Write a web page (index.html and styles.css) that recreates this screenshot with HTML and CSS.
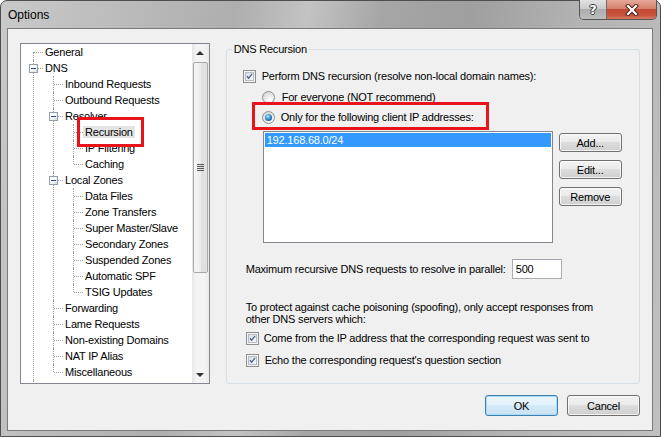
FILE: index.html
```html
<!DOCTYPE html>
<html>
<head>
<meta charset="utf-8">
<link rel="stylesheet" href="styles.css">
</head>
<body>
<div class="window">
  <div class="titlebar">
    <span class="title">Options</span>
    <div class="caps">
      <div class="cap help">?</div>
      <div class="cap close">
        <svg width="16" height="12" viewBox="0 0 16 12"><path d="M4 2 L12 10 M12 2 L4 10" stroke="#4a2018" stroke-width="4.2" stroke-linecap="square" fill="none"/><path d="M4 2 L12 10 M12 2 L4 10" stroke="#ffffff" stroke-width="2.2" stroke-linecap="square" fill="none"/></svg>
      </div>
    </div>
  </div>
  <div class="client">
    <div class="main">
      <div class="tree">
        <ul class="tree-root">
          <li class="first"><div class="row"><span class="lbl">General</span></div></li>
          <li><div class="row"><span class="exp"></span><span class="lbl">DNS</span></div>
            <ul>
              <li><div class="row"><span class="lbl">Inbound Requests</span></div></li>
              <li><div class="row"><span class="lbl">Outbound Requests</span></div></li>
              <li><div class="row"><span class="exp"></span><span class="lbl">Resolver</span></div>
                <ul>
                  <li><div class="row"><span class="lbl sel">Recursion</span><span class="annot annot-tree"></span></div></li>
                  <li><div class="row"><span class="lbl">IP Filtering</span></div></li>
                  <li class="last"><div class="row"><span class="lbl">Caching</span></div></li>
                </ul>
              </li>
              <li><div class="row"><span class="exp"></span><span class="lbl">Local Zones</span></div>
                <ul>
                  <li><div class="row"><span class="lbl">Data Files</span></div></li>
                  <li><div class="row"><span class="lbl">Zone Transfers</span></div></li>
                  <li><div class="row"><span class="lbl">Super Master/Slave</span></div></li>
                  <li><div class="row"><span class="lbl">Secondary Zones</span></div></li>
                  <li><div class="row"><span class="lbl">Suspended Zones</span></div></li>
                  <li><div class="row"><span class="lbl">Automatic SPF</span></div></li>
                  <li class="last"><div class="row"><span class="lbl">TSIG Updates</span></div></li>
                </ul>
              </li>
              <li><div class="row"><span class="lbl">Forwarding</span></div></li>
              <li><div class="row"><span class="lbl">Lame Requests</span></div></li>
              <li><div class="row"><span class="lbl">Non-existing Domains</span></div></li>
              <li><div class="row"><span class="lbl">NAT IP Alias</span></div></li>
              <li class="last"><div class="row"><span class="lbl">Miscellaneous</span></div></li>
            </ul>
          </li>
          <li><div class="row"></div></li>
        </ul>
        <div class="vscroll">
          <div class="sb-arrow"><span class="tri up"></span></div>
          <div class="sb-thumb"><span class="grip"></span></div>
          <div class="sb-space"></div>
          <div class="sb-arrow"><span class="tri down"></span></div>
        </div>
      </div>
      <fieldset class="group">
        <legend>DNS Recursion</legend>
        <div class="opt r1">
          <span class="cb"><svg width="9" height="9" viewBox="0 0 9 9"><path d="M1.3 4.2 L3.4 6.8 L7.8 1.2" fill="none" stroke="#4b5f8e" stroke-width="1.7"/></svg></span>
          <span>Perform DNS recursion (resolve non-local domain names):</span>
        </div>
        <div class="opt rad1">
          <span class="rb"></span>
          <span>For everyone (NOT recommend)</span>
        </div>
        <div class="opt rad2">
          <span class="rb on"><i></i></span>
          <span>Only for the following client IP addresses:</span>
          <span class="annot annot-radio"></span>
        </div>
        <div class="listarea">
          <div class="listbox">
            <div class="list-item sel">192.168.68.0/24</div>
          </div>
          <div class="side-btns">
            <div class="btn">Add...</div>
            <div class="btn">Edit...</div>
            <div class="btn">Remove</div>
          </div>
        </div>
        <div class="maxrow">
          <span>Maximum recursive DNS requests to resolve in parallel:</span>
          <div class="textbox">500</div>
        </div>
        <div class="note">To protect against cache poisoning (spoofing), only accept responses from<br>other DNS servers which:</div>
        <div class="opt c2">
          <span class="cb"><svg width="9" height="9" viewBox="0 0 9 9"><path d="M1.3 4.2 L3.4 6.8 L7.8 1.2" fill="none" stroke="#4b5f8e" stroke-width="1.7"/></svg></span>
          <span>Come from the IP address that the corresponding request was sent to</span>
        </div>
        <div class="opt c3">
          <span class="cb"><svg width="9" height="9" viewBox="0 0 9 9"><path d="M1.3 4.2 L3.4 6.8 L7.8 1.2" fill="none" stroke="#4b5f8e" stroke-width="1.7"/></svg></span>
          <span>Echo the corresponding request's question section</span>
        </div>
      </fieldset>
    </div>
    <div class="footer">
      <div class="btn big default">OK</div>
      <div class="btn big">Cancel</div>
    </div>
  </div>
</div>
</body>
</html>
```
FILE: styles.css
```css
html, body {
  margin: 0;
  padding: 0;
}
body {
  width: 661px;
  height: 437px;
  overflow: hidden;
  background: #ffffff;
  font-family: "Liberation Sans", Arial, sans-serif;
  font-size: 11px;
  letter-spacing: -0.2px;
  color: #000;
}
.window {
  box-sizing: border-box;
  width: 661px;
  height: 437px;
  display: flex;
  flex-direction: column;
  border: 1px solid #4e4e4e;
  border-radius: 7px 7px 0 0;
  padding: 0 7px 5px 6px;
  background: linear-gradient(100deg, #c9c9c9 0%, #bababa 18%, #aeaeae 32%, #c3c3c3 42%, #a6a6a6 52%, #9f9f9f 64%, #b4b4b4 80%, #c0c0c0 100%);
}
.titlebar {
  height: 27px;
  margin: 0 -7px 0 -6px;
  display: flex;
  align-items: flex-start;
}
.title {
  padding: 6px 0 0 7px;
  font-size: 12px;
  line-height: 16px;
  letter-spacing: 0;
  color: #000;
}
.caps {
  margin-left: auto;
  margin-right: 3px;
  margin-top: -1px;
  height: 20px;
  display: flex;
  box-sizing: border-box;
  border: 1px solid #555;
  border-top: none;
  border-radius: 0 0 5px 5px;
  overflow: hidden;
}
.cap {
  display: flex;
  align-items: center;
  justify-content: center;
}
.help {
  width: 27px;
  box-sizing: border-box;
  border-right: 1px solid #6b6b6b;
  background: linear-gradient(#e2e2e2 0%, #cbcbcb 45%, #adadad 50%, #bdbdbd 100%);
  color: #fff;
  font-family: "DejaVu Sans", sans-serif;
  font-weight: bold;
  font-size: 13px;
  letter-spacing: 0;
  text-shadow: 1px 0 0 #3a3a3a, -1px 0 0 #3a3a3a, 0 1px 0 #3a3a3a, 0 -1px 0 #3a3a3a;
}
.close {
  width: 49px;
  background: linear-gradient(#e6a899 0%, #d8806d 45%, #c44a33 50%, #c7533c 80%, #d97a62 100%);
}
.client {
  flex: 1;
  box-sizing: border-box;
  border: 1px solid #7b7b7b;
  background: #f0f0f0;
  padding: 14px 12px 0 12px;
  display: flex;
  flex-direction: column;
}
.main {
  display: flex;
  gap: 16px;
  height: 341px;
}
/* tree */
.tree {
  box-sizing: border-box;
  width: 190px;
  height: 341px;
  border: 1px solid #828790;
  background: #fff;
  display: flex;
  overflow: hidden;
}
.tree ul {
  list-style: none;
  margin: 0;
  padding: 0;
}
.tree .tree-root {
  flex: 1;
  margin: 0;
  padding: 0 0 0 4px;
  overflow: hidden;
}
.tree li {
  position: relative;
  padding-left: 20px;
}
.tree li::before {
  content: "";
  position: absolute;
  left: 8px;
  top: 0;
  height: 100%;
  border-left: 1px dotted #a0a0a0;
}
.tree li.first::before {
  top: 8px;
  height: calc(100% - 8px);
}
.tree li.last::before {
  height: 8px;
}
.row {
  position: relative;
  height: 16px;
  line-height: 16px;
  white-space: nowrap;
}
.row::before {
  content: "";
  position: absolute;
  left: -11px;
  width: 9px;
  top: 8px;
  border-top: 1px dotted #a0a0a0;
}
.lbl {
  padding: 0 2px;
  margin-left: -2px;
}
.lbl.sel {
  background: #e4e4e4;
}
.exp {
  position: absolute;
  left: -16px;
  top: 4px;
  width: 9px;
  height: 9px;
  box-sizing: border-box;
  border: 1px solid #919daa;
  background: linear-gradient(135deg, #ffffff 30%, #dadde2 100%);
  z-index: 1;
}
.exp::before {
  content: "";
  position: absolute;
  left: 1px;
  top: 3px;
  width: 5px;
  height: 1px;
  background: #2d4a85;
}
.exp::after {
  content: "";
  position: absolute;
  left: 3px;
  top: 8px;
  height: 3px;
  border-left: 1px dotted #a0a0a0;
}
.vscroll {
  width: 17px;
  display: flex;
  flex-direction: column;
  background: linear-gradient(to right, #e6e6e6, #f3f3f3 25%, #f3f3f3 75%, #ebebeb);
}
.sb-arrow {
  height: 17px;
  display: flex;
  align-items: center;
  justify-content: center;
}
.tri {
  width: 0;
  height: 0;
  border-left: 4px solid transparent;
  border-right: 4px solid transparent;
}
.tri.up {
  border-bottom: 4px solid #303030;
}
.tri.down {
  border-top: 4px solid #303030;
}
.sb-thumb {
  box-sizing: border-box;
  margin: 1px 1px 0;
  height: 211px;
  border: 1px solid #a8a8a8;
  border-radius: 2px;
  background: linear-gradient(to right, #f6f6f6, #ececec 50%, #dedede 51%, #e2e2e2);
  display: flex;
  align-items: center;
  justify-content: center;
}
.grip {
  width: 7px;
  height: 7px;
  background: repeating-linear-gradient(#555 0 1px, transparent 1px 2px);
}
.sb-space {
  flex: 1;
}
/* group */
.group {
  box-sizing: border-box;
  width: 415px;
  height: 341px;
  margin: 0;
  padding: 0 0 0 5px;
  min-width: 0;
  border: 1px solid #d5dfe5;
  border-radius: 3px;
}
.group legend {
  padding: 0 2px;
  line-height: 12px;
}
.opt {
  display: flex;
  align-items: center;
  height: 16px;
  white-space: nowrap;
}
.r1 {
  margin: 13px 0 0 11px;
  gap: 6px;
}
.rad1 {
  margin: 5px 0 0 30px;
  gap: 7px;
}
.rad2 {
  position: relative;
  margin: 4px 0 0 30px;
  gap: 6px;
}
.c2 {
  margin: 5px 0 0 14px;
  gap: 5px;
}
.c3 {
  margin: 6px 0 0 14px;
  gap: 6px;
}
.cb {
  box-sizing: border-box;
  width: 13px;
  height: 13px;
  flex: none;
  border: 1px solid #8e8f8f;
  padding: 1px;
  background: #f4f4f4;
  display: flex;
}
.cb svg {
  box-sizing: border-box;
  width: 9px;
  height: 9px;
  border: 1px solid #b7bcc3;
  background: linear-gradient(135deg, #d9dde2, #f8f9fa);
  padding: 0;
}
.rb {
  box-sizing: border-box;
  width: 13px;
  height: 13px;
  flex: none;
  border: 1px solid #8e8f8f;
  border-radius: 50%;
  background: radial-gradient(circle at 65% 70%, #ffffff 0%, #e8e8e8 45%, #cfcfcf 100%);
  display: flex;
  align-items: center;
  justify-content: center;
}
.rb.on i {
  width: 7px;
  height: 7px;
  border-radius: 50%;
  background: radial-gradient(circle at 40% 35%, #c4ecff 0%, #4aa3e0 35%, #145a9e 75%, #0d3c70 100%);
}
.annot {
  position: absolute;
  box-sizing: border-box;
  border: 3px solid #e8131b;
  pointer-events: none;
}
.annot-radio {
  left: -10px;
  top: -7px;
  width: 237px;
  height: 28px;
}
.annot-tree {
  left: -8px;
  top: -7px;
  width: 67px;
  height: 30px;
  z-index: 2;
}
.listarea {
  display: flex;
  gap: 6px;
  height: 112px;
  margin: 6px 0 0 31px;
}
.listbox {
  box-sizing: border-box;
  width: 290px;
  height: 112px;
  border: 1px solid #828790;
  background: #fff;
  padding: 1px;
}
.list-item {
  height: 14px;
  line-height: 14px;
  padding-left: 2px;
}
.list-item.sel {
  background: #3399ff;
  color: #fff;
}
.side-btns {
  display: flex;
  flex-direction: column;
  gap: 8px;
  margin-top: 2px;
}
.btn {
  box-sizing: border-box;
  width: 63px;
  height: 19px;
  border: 1px solid #707070;
  border-radius: 3px;
  background: linear-gradient(#f2f2f2 0%, #ebebeb 45%, #dddddd 50%, #cfcfcf 100%);
  box-shadow: inset 0 0 0 1px rgba(255, 255, 255, 0.75);
  display: flex;
  align-items: center;
  justify-content: center;
  color: #000;
}
.btn.big {
  width: 73px;
  height: 21px;
}
.btn.default {
  border-color: #3c7fb1;
  box-shadow: inset 0 0 0 1px #a8dcf6;
  background: linear-gradient(#eaf6fd 0%, #e3f1fb 45%, #d4eaf8 50%, #c8e1f4 100%);
}
.maxrow {
  display: flex;
  align-items: center;
  height: 20px;
  margin: 16px 0 0 14px;
  white-space: nowrap;
}
.textbox {
  box-sizing: border-box;
  width: 50px;
  height: 20px;
  margin-left: 6px;
  border: 1px solid #abadb3;
  border-top-color: #a0a3ab;
  background: #fff;
  padding-left: 3px;
  line-height: 18px;
}
.note {
  margin: 22px 0 0 14px;
  line-height: 12px;
  white-space: nowrap;
}
.footer {
  display: flex;
  justify-content: flex-end;
  gap: 9px;
  margin-top: 11px;
}
```
